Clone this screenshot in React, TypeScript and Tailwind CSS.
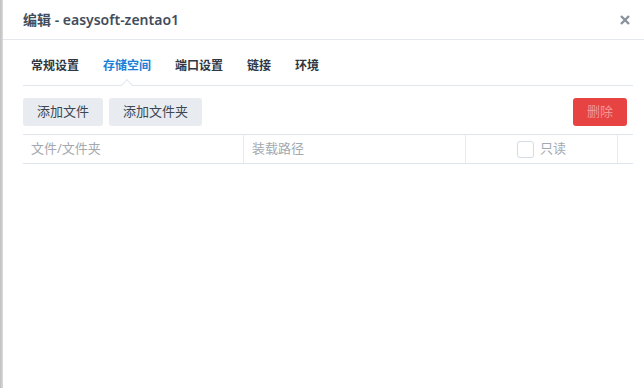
import React from "react";

const font = { fontFamily: '"Noto Sans", "Noto Sans CJK SC", sans-serif' };

export default function App() {
  const tabs = ["常规设置", "存储空间", "端口设置", "链接", "环境"];
  return (
    <div className="w-[644px] h-[388px] flex bg-white overflow-hidden" style={font}>
      <div className="w-[3px] h-full bg-gradient-to-r from-[#bfbfbf] to-[#dadada]" />
      <div className="flex-1 flex flex-col bg-white">
        <div className="h-[40px] border-b border-[#e4e8ed] flex items-center justify-between pl-[20px] pr-[13px]">
          <div className="text-[14px] font-semibold text-[#424d5c] leading-none">编辑 - easysoft-zentao1</div>
          <svg width="12" height="12" viewBox="0 0 12 12" className="mt-[1px]">
            <path d="M2 2 L10 10 M10 2 L2 10" stroke="#89929c" strokeWidth="2.4" strokeLinecap="butt" />
          </svg>
        </div>
        <div className="pl-[20px] pr-[11px] flex flex-col">
          <div className="h-[46px] border-b border-[#dfe5ec] flex items-center gap-[24px] pl-[8px] pt-[6px]">
            {tabs.map((t, i) => (
              <div
                key={t}
                className={`relative h-full flex items-center text-[12px] font-bold leading-none ${i === 1 ? "text-[#1a7fd6]" : "text-[#2f3742]"}`}
              >
                {t}
                {i === 1 && (
                  <div className="absolute left-1/2 -translate-x-1/2 bottom-[-5px] w-[9px] h-[9px] rotate-45 bg-white border-l border-t border-[#dfe5ec]" />
                )}
              </div>
            ))}
          </div>
          <div className="mt-[12px] flex items-center gap-[6px]">
            <div className="h-[28px] w-[80px] rounded-[3px] bg-[#e8ecf1] flex items-center justify-center text-[13px] text-[#3c4652]">添加文件</div>
            <div className="h-[28px] w-[93px] rounded-[3px] bg-[#e8ecf1] flex items-center justify-center text-[13px] text-[#3c4652]">添加文件夹</div>
            <div className="ml-auto mr-[6px] h-[28px] w-[54px] rounded-[3px] bg-[#e84343] flex items-center justify-center text-[13px] text-[#f29797]">删除</div>
          </div>
          <div className="mt-[8px] h-[30px] border-t border-b border-[#dfe5ec] flex text-[13px] text-[#a3a9b1]">
            <div className="w-[221px] flex items-center pl-[8px] border-r border-[#e6ebf0]">文件/文件夹</div>
            <div className="w-[222px] flex items-center pl-[8px] border-r border-[#e6ebf0]">装载路径</div>
            <div className="w-[152px] flex items-center justify-center gap-[6px] border-r border-[#e6ebf0]">
              <div className="w-[17px] h-[17px] rounded-[3px] border border-[#d3dbe4] bg-white" />
              <span>只读</span>
            </div>
            <div className="flex-1" />
          </div>
        </div>
      </div>
    </div>
  );
}
